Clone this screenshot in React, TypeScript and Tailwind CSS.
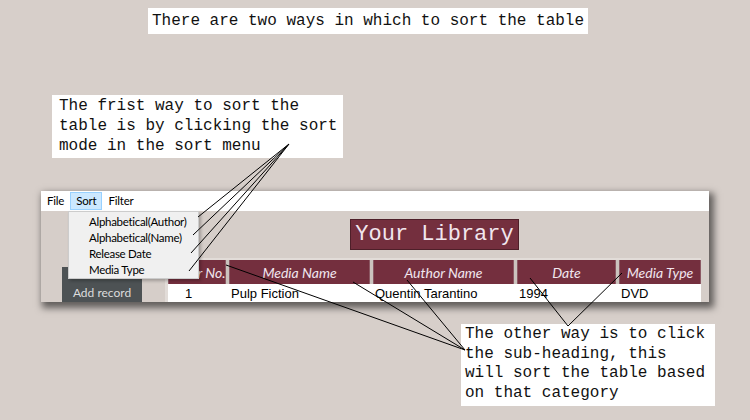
const mono = "font-['Liberation_Mono','Courier_New',monospace]";
const ui = "font-['Lato','Segoe_UI',sans-serif]";

const columns = [
  { label: "Order No.", width: "w-[58px]" },
  { label: "Media Name", width: "w-[141px]" },
  { label: "Author Name", width: "w-[141px]" },
  { label: "Date", width: "w-[99px]" },
  { label: "Media Type", width: "w-[82px]" },
];

const row = ["1", "Pulp Fiction", "Quentin Tarantino", "1994", "DVD"];

const sortModes = ["Alphabetical(Author)", "Alphabetical(Name)", "Release Date", "Media Type"];

function Callouts() {
  return (
    <svg className="absolute inset-0 pointer-events-none" width="750" height="420">
      <g stroke="#000" strokeWidth="1" fill="none">
        <line x1="289" y1="144" x2="198" y2="217" />
        <line x1="289" y1="144" x2="193" y2="235" />
        <line x1="289" y1="144" x2="191" y2="253" />
        <line x1="289" y1="144" x2="189" y2="271" />
        <line x1="465" y1="350" x2="226" y2="265" />
        <line x1="465" y1="350" x2="353" y2="282" />
        <line x1="465" y1="350" x2="407" y2="280" />
        <line x1="568" y1="326" x2="530" y2="278" />
        <line x1="568" y1="326" x2="622" y2="273" />
      </g>
    </svg>
  );
}

function LibraryWindow() {
  return (
    <div className="relative w-[668px] h-[111px] ml-[41px] mt-[191px] bg-[#d6cec9] shadow-[3px_4px_7px_2px_rgba(0,0,0,0.55)]">
      <div className="h-full overflow-hidden flex flex-col">
        <div className={`h-[20px] bg-white flex items-center text-[11.5px] tracking-[-0.2px] text-black ${ui}`}>
          <span className="ml-[6px]">File</span>
          <span className="ml-[6px] h-[18px] px-[5px] flex items-center bg-[#cce8ff] border border-[#99d1ff]">Sort</span>
          <span className="ml-[6px]">Filter</span>
        </div>
        <div className="flex flex-1 min-h-0">
          <div className="pl-[21px] pt-[56px]">
            <div className={`w-[80px] h-[40px] bg-[#4d5254] text-[#dcdcdc] text-[12px] pt-[17px] text-center ${ui}`}>
              Add record
            </div>
          </div>
          <div className="ml-[23px] flex flex-col border-l-[3px] border-[#e2dcd8]">
            <div className="pt-[8px] flex justify-center">
              <div className={`h-[31px] px-[4px] bg-[#742f3e] border border-[#4e1f29] text-[22px] leading-[29px] text-[#f1e6ee] ${mono}`}>
                Your Library
              </div>
            </div>
            <div className="mt-[8px] border-t-[2px] border-[#e2dcd8] flex gap-[3px] bg-[#cbc3be]">
              {columns.map((c) => (
                <div
                  key={c.label}
                  className={`${c.width} h-[24px] bg-[#742f3e] text-[#f1e6ee] italic text-[14px] whitespace-nowrap overflow-hidden flex items-center justify-center font-['Lato',sans-serif] border-x border-[#8c5964]`}
                >
                  {c.label}
                </div>
              ))}
            </div>
            <div className="flex gap-[3px] bg-white h-[20px] font-['Liberation_Sans',Arial,sans-serif] text-[13px] text-black items-center">
              {row.map((v, i) => (
                <div key={i} className={`${columns[i].width} whitespace-nowrap ${i === 0 ? "pl-[17px]" : "pl-[2px]"}`}>
                  {v}
                </div>
              ))}
            </div>
          </div>
        </div>
      </div>
      <div
        className={`absolute left-[27px] top-[20px] w-[131px] h-[68px] bg-[#f0f0f0] border border-[#cccccc] shadow-[2px_2px_3px_rgba(0,0,0,0.25)] pt-[2px] text-[11.5px] tracking-[-0.3px] text-black ${ui}`}
      >
        {sortModes.map((m) => (
          <div key={m} className="h-[16px] leading-[16px] pl-[20px]">
            {m}
          </div>
        ))}
      </div>
    </div>
  );
}

export default function App() {
  return (
    <div className="relative w-[750px] h-[420px] bg-[#d7cfca] overflow-hidden">
      <div className="absolute left-[148px] top-[8px] w-[440px] h-[26px] bg-white pl-[4px] pt-[3px]">
        <p className={`text-[16px] leading-[20px] text-[#111] whitespace-pre ${mono}`}>
          There are two ways in which to sort the table
        </p>
      </div>
      <div className="absolute left-[52px] top-[95px] w-[291px] h-[63px] bg-white pl-[7px] pt-[1px]">
        <p className={`text-[16px] leading-[20px] text-[#111] ${mono}`}>
          The frist way to sort the
          <br />
          table is by clicking the sort
          <br />
          mode in the sort menu
        </p>
      </div>
      <div className="absolute left-[461px] top-[324px] w-[254px] h-[82px] bg-white pl-[4px] pt-[1px]">
        <p className={`text-[16px] leading-[19.5px] text-[#111] ${mono}`}>
          The other way is to click
          <br />
          the sub-heading, this
          <br />
          will sort the table based
          <br />
          on that category
        </p>
      </div>
      <LibraryWindow />
      <Callouts />
    </div>
  );
}
